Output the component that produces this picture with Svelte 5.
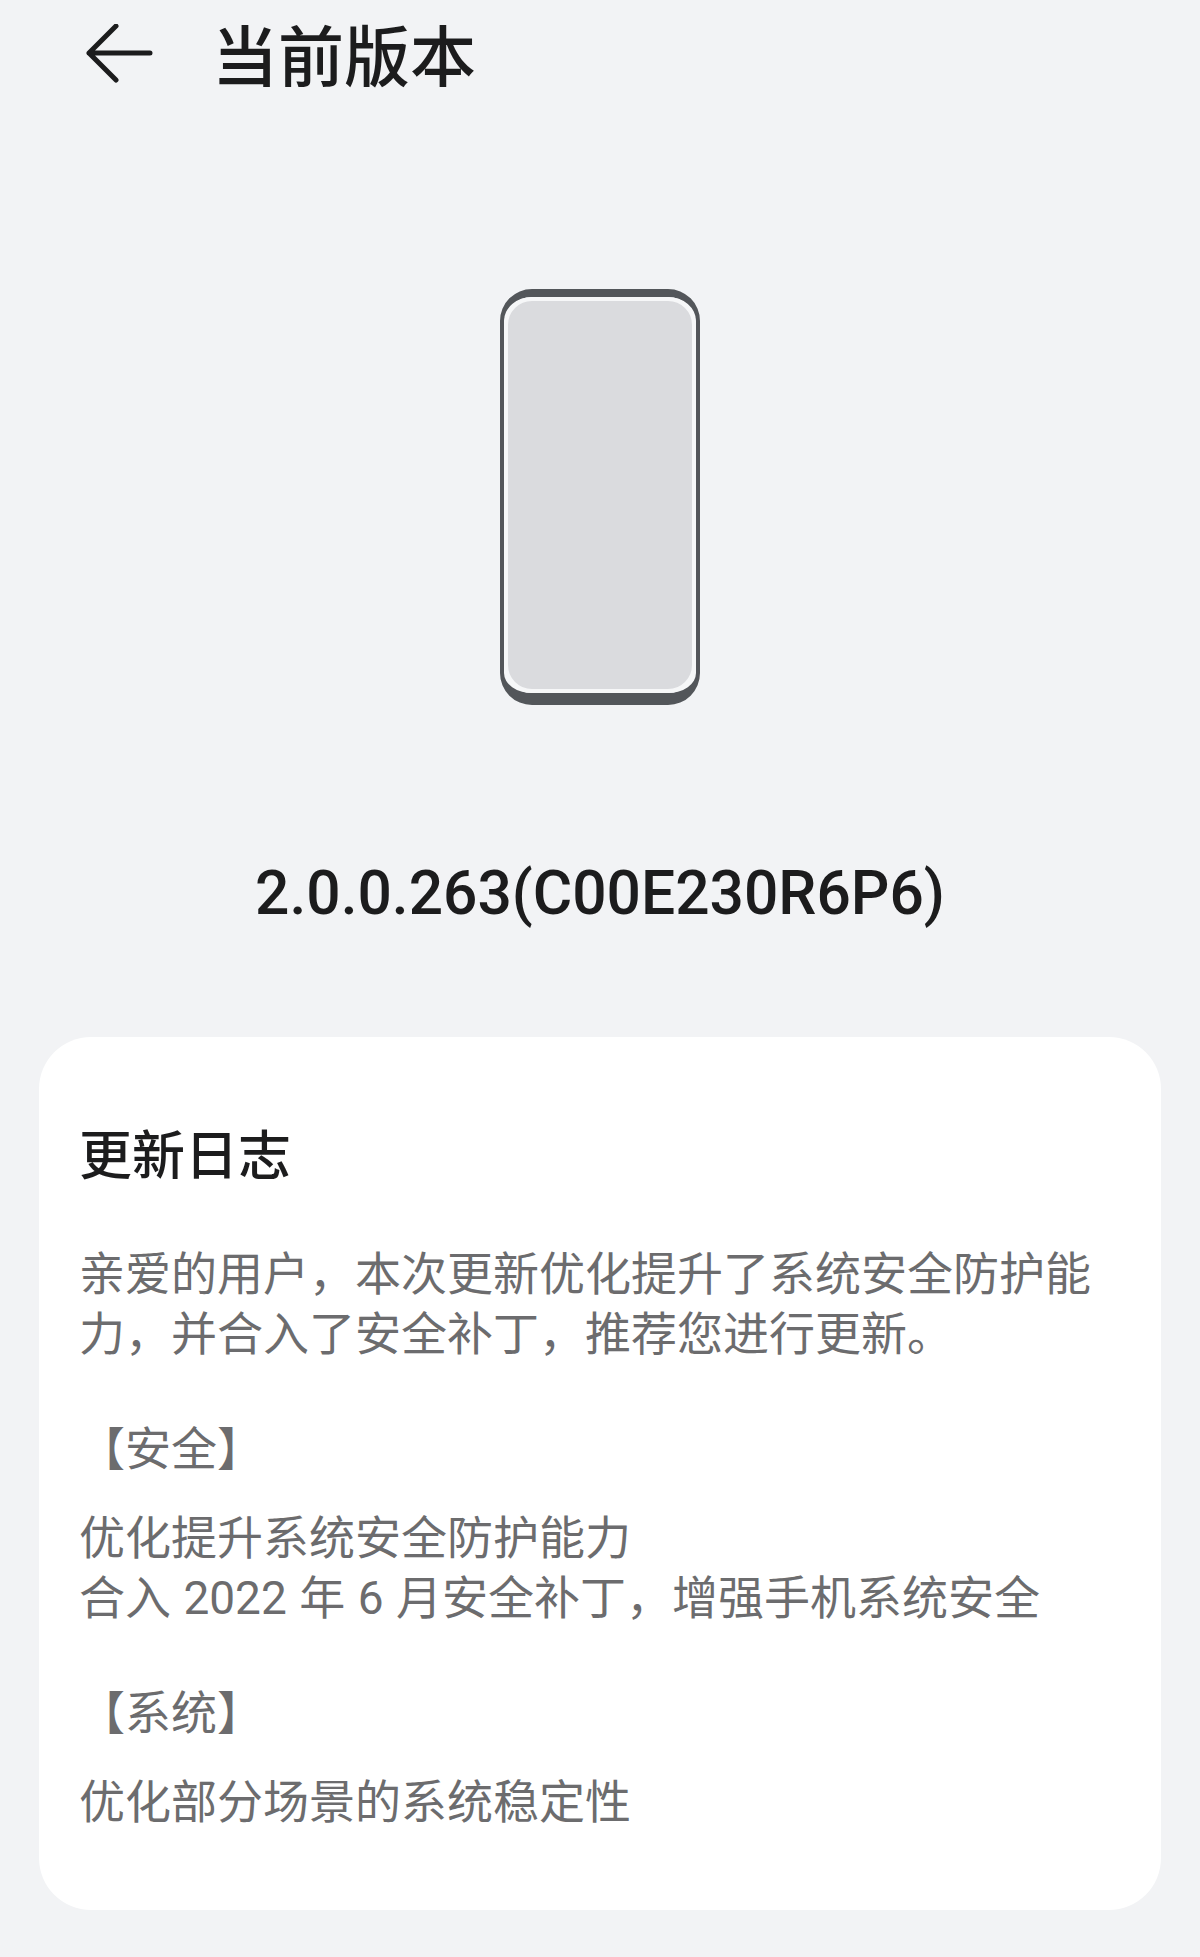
<script lang="ts">
  const intro = '亲爱的用户，本次更新优化提升了系统安全防护能力，并合入了安全补丁，推荐您进行更新。';
  const sections = [
    { name: '【安全】', lines: ['优化提升系统安全防护能力', '合入 2022 年 6 月安全补丁，增强手机系统安全'] },
    { name: '【系统】', lines: ['优化部分场景的系统稳定性'] },
  ];
</script>

<div class="page">
  <header class="topbar">
    <svg class="back" width="70" height="66" viewBox="0 0 70 66" fill="none" aria-hidden="true">
      <path d="M3 29H64M30 2L3 29L30 56" stroke="#1c1c1d" stroke-width="5" stroke-linecap="round" stroke-linejoin="round" />
    </svg>
    <h1>当前版本</h1>
  </header>

  <div class="device">
    <div class="phone"><div class="screen"></div></div>
  </div>

  <div class="version">2.0.0.263(C00E230R6P6)</div>

  <section class="card">
    <h2>更新日志</h2>
    <p>{intro}</p>
    {#each sections as section}
      <h3>{section.name}</h3>
      {#each section.lines as line}
        <p>{line}</p>
      {/each}
    {/each}
  </section>
</div>

<style>
  :global(body) {
    margin: 0;
    background: #f2f3f5;
  }

  .page {
    height: 1957px;
    overflow: hidden;
    background: #f2f3f5;
    font-family: "Roboto", "Noto Sans CJK SC", sans-serif;
    box-sizing: border-box;
    padding: 24px 39px 0;
  }

  .topbar {
    display: flex;
    align-items: flex-start;
    gap: 56px;
    height: 66px;
    padding-left: 47px;
  }

  .back { flex: none; }

  h1 {
    margin: 2px 0 0;
    font-size: 66px;
    line-height: 66px;
    font-weight: 500;
    color: #1c1c1d;
  }

  .device {
    display: flex;
    justify-content: center;
    padding-top: 199px;
  }

  .phone {
    width: 200px;
    height: 416px;
    box-sizing: border-box;
    background: #f6f7f8;
    border: solid #53565a;
    border-width: 8px 4px 12px;
    border-radius: 32px;
  }

  .screen {
    height: 100%;
    box-sizing: border-box;
    background: #dadbde;
    border: 4px solid #f6f7f8;
    border-radius: 28px;
  }

  .version {
    margin-top: 154px;
    text-align: center;
    font-size: 60.500px;
    line-height: 70px;
    font-weight: 500;
    color: #1c1c1d;
  }

  .card {
    margin-top: 108px;
    height: 873px;
    box-sizing: border-box;
    padding: 89px 40px 0;
    background: #fff;
    border-radius: 52px;
  }

  h2 {
    margin: 0 0 56px;
    font-size: 53px;
    line-height: 62px;
    font-weight: 500;
    color: #1c1c1d;
  }

  h3 {
    margin: 55px 0 29px;
    font-size: 46px;
    line-height: 60px;
    font-weight: 400;
    color: #6c6c6e;
  }

  p {
    margin: 0;
    font-size: 46px;
    line-height: 60px;
    word-spacing: 1px;
    color: #6c6c6e;
  }
</style>
